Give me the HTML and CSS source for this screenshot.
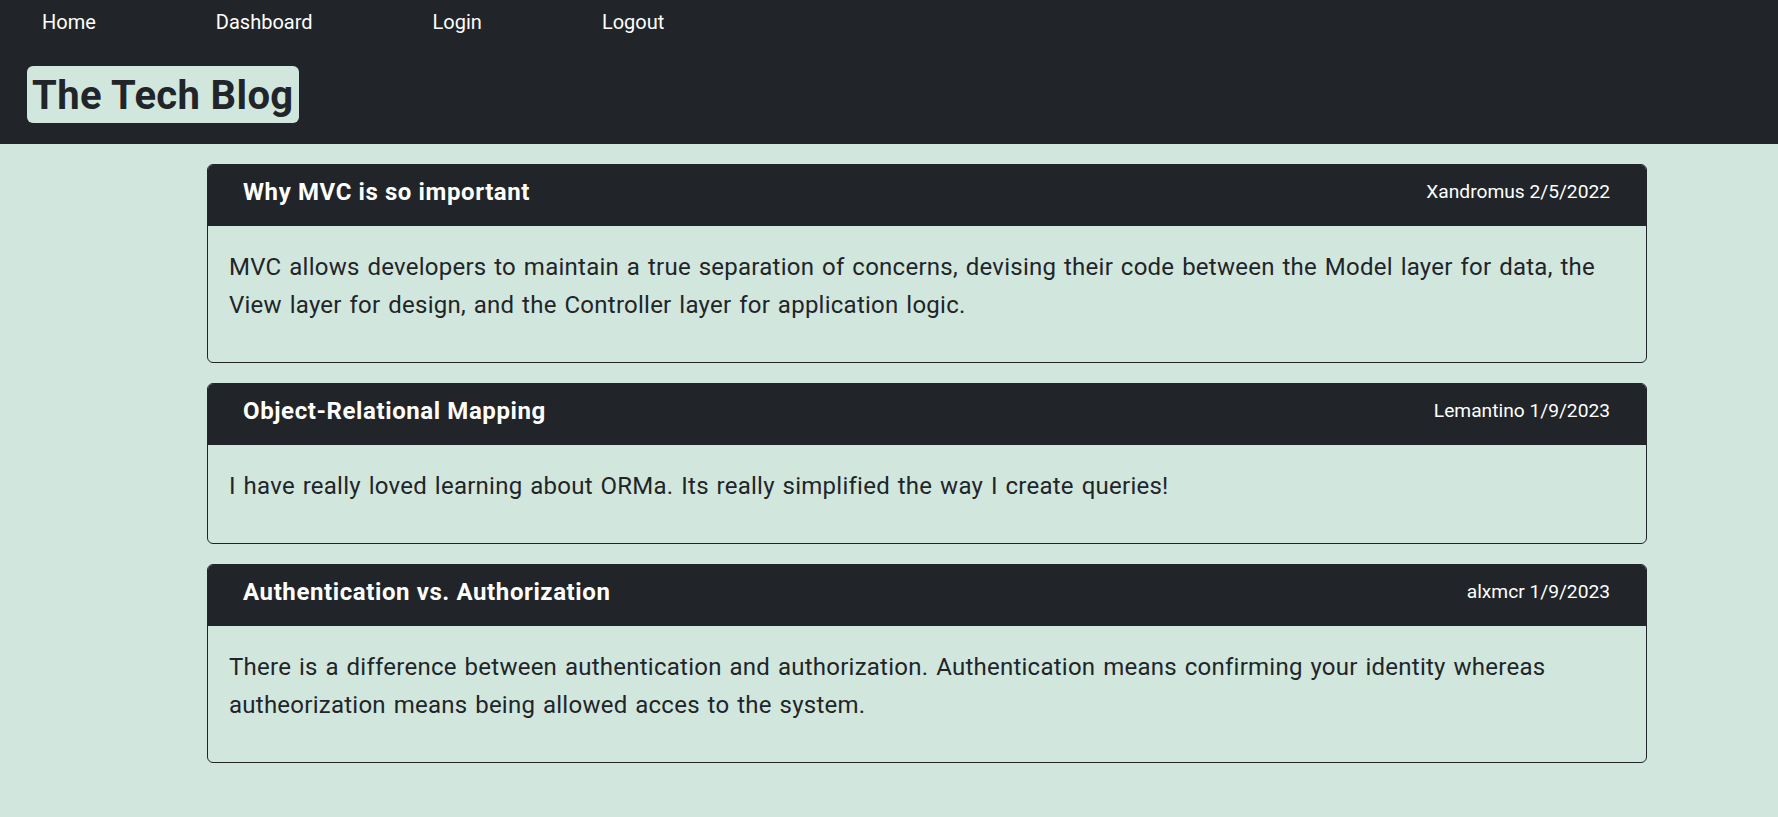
FILE: index.html
```html
<!DOCTYPE html>
<html lang="en">
<head>
<meta charset="utf-8">
<title>The Tech Blog</title>
<link rel="stylesheet" href="styles.css">
</head>
<body>
<header class="site-header">
  <nav class="site-nav">
    <a class="nav-link" href="#">Home</a>
    <a class="nav-link" href="#">Dashboard</a>
    <a class="nav-link" href="#">Login</a>
    <a class="nav-link" href="#">Logout</a>
  </nav>
  <h1 class="brand">The Tech Blog</h1>
</header>
<main class="posts">
  <article class="post">
    <div class="post-header">
      <h2 class="post-title">Why MVC is so important</h2>
      <span class="post-meta">Xandromus 2/5/2022</span>
    </div>
    <div class="post-body">
      <p>MVC allows developers to maintain a true separation of concerns, devising their code between the Model layer for data, the View layer for design, and the Controller layer for application logic.</p>
    </div>
  </article>
  <article class="post">
    <div class="post-header">
      <h2 class="post-title">Object-Relational Mapping</h2>
      <span class="post-meta">Lemantino 1/9/2023</span>
    </div>
    <div class="post-body">
      <p>I have really loved learning about ORMa. Its really simplified the way I create queries!</p>
    </div>
  </article>
  <article class="post">
    <div class="post-header">
      <h2 class="post-title">Authentication vs. Authorization</h2>
      <span class="post-meta">alxmcr 1/9/2023</span>
    </div>
    <div class="post-body">
      <p>There is a difference between authentication and authorization. Authentication means confirming your identity whereas autheorization means being allowed acces to the system.</p>
    </div>
  </article>
</main>
</body>
</html>
```

FILE: styles.css
```css
* {
  box-sizing: border-box;
}

html, body {
  margin: 0;
  padding: 0;
}

body {
  background: #d1e7dd;
  color: #212529;
  font-family: "Segoe UI", Roboto, "Liberation Sans", sans-serif;
  min-height: 817px;
}

.site-header {
  background: #212529;
  height: 144px;
  padding: 0;
}

.site-nav {
  display: flex;
  gap: 120px;
  padding: 7px 0 0 42px;
  height: 46px;
}

.nav-link {
  color: #ffffff;
  text-decoration: none;
  font-size: 20px;
  line-height: 30px;
}

.brand {
  display: inline-block;
  margin: 20px 0 0 27px;
  padding: 6px 5px 3px 5px;
  background: #d1e7dd;
  color: #212529;
  border-radius: 6px;
  font-size: 40px;
  line-height: 48px;
  font-weight: 700;
  letter-spacing: 0.35px;
}

.posts {
  display: flex;
  flex-direction: column;
  gap: 20px;
  padding: 20px 131px 40px 207px;
}

.post {
  border: 1px solid #212529;
  border-radius: 6px;
  overflow: hidden;
}

.post-header {
  background: #212529;
  color: #ffffff;
  height: 61px;
  display: flex;
  justify-content: space-between;
  align-items: baseline;
  padding: 13px 36px 0 35px;
}

.post-title {
  margin: 0;
  font-size: 24px;
  line-height: 28.8px;
  font-weight: 700;
  letter-spacing: 0.6px;
}

.post-meta {
  font-size: 19.2px;
  position: relative;
  top: -2px;
}

.post-body {
  padding: 22px 21px 38px 21px;
}

.post-body p {
  margin: 0;
  font-size: 24px;
  line-height: 38px;
  letter-spacing: 0.25px;
  word-spacing: 1.6px;
}
```
